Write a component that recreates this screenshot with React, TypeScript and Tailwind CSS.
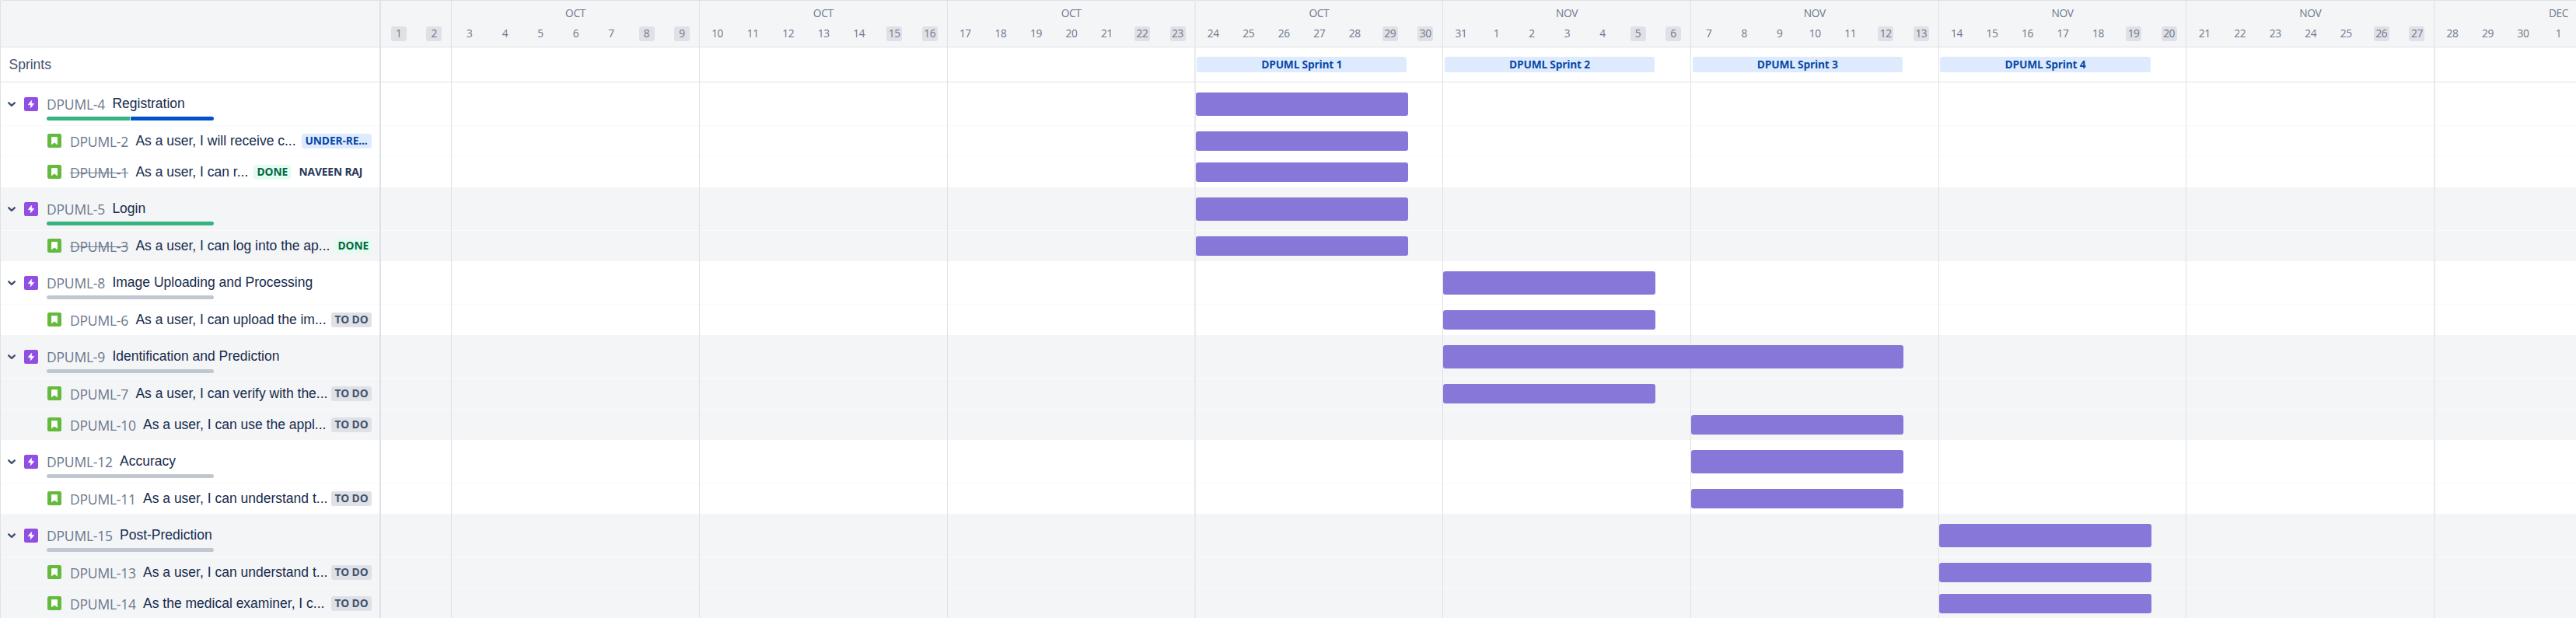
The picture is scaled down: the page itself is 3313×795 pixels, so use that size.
import React from "react";

type Badge = { label: string; tone: "blue" | "green" | "gray" | "plain" };
type Issue = { id: string; title: string; badges: Badge[]; start: number; days: number; done?: boolean };
type Epic = { id: string; title: string; progress: string[]; start: number; days: number; issues: Issue[] };

const DAY = 45.54;

const todo: Badge = { label: "TO DO", tone: "gray" };
const done: Badge = { label: "DONE", tone: "green" };

const GREEN = "bg-[#36b37e]";
const BLUE = "bg-[#0052cc]";
const GRAY = "bg-[#c1c7d0]";

const epics: Epic[] = [
  {
    id: "DPUML-4", title: "Registration", progress: [GREEN, BLUE], start: 23, days: 6,
    issues: [
      { id: "DPUML-2", title: "As a user, I will receive c...", badges: [{ label: "UNDER-RE...", tone: "blue" }], start: 23, days: 6 },
      { id: "DPUML-1", title: "As a user, I can r...", badges: [done, { label: "NAVEEN RAJ", tone: "plain" }], start: 23, days: 6, done: true },
    ],
  },
  {
    id: "DPUML-5", title: "Login", progress: [GREEN], start: 23, days: 6,
    issues: [{ id: "DPUML-3", title: "As a user, I can log into the ap...", badges: [done], start: 23, days: 6, done: true }],
  },
  {
    id: "DPUML-8", title: "Image Uploading and Processing", progress: [GRAY], start: 30, days: 6,
    issues: [{ id: "DPUML-6", title: "As a user, I can upload the im...", badges: [todo], start: 30, days: 6 }],
  },
  {
    id: "DPUML-9", title: "Identification and Prediction", progress: [GRAY], start: 30, days: 13,
    issues: [
      { id: "DPUML-7", title: "As a user, I can verify with the...", badges: [todo], start: 30, days: 6 },
      { id: "DPUML-10", title: "As a user, I can use the appl...", badges: [todo], start: 37, days: 6 },
    ],
  },
  {
    id: "DPUML-12", title: "Accuracy", progress: [GRAY], start: 37, days: 6,
    issues: [{ id: "DPUML-11", title: "As a user, I can understand t...", badges: [todo], start: 37, days: 6 }],
  },
  {
    id: "DPUML-15", title: "Post-Prediction", progress: [GRAY], start: 44, days: 6,
    issues: [
      { id: "DPUML-13", title: "As a user, I can understand t...", badges: [todo], start: 44, days: 6 },
      { id: "DPUML-14", title: "As the medical examiner, I c...", badges: [todo], start: 44, days: 6 },
    ],
  },
];

const THIN = "border-r border-[#dfe1e6]";
const SOFT = "border-r border-[#e8eaee] shadow-[1px_0_0_#e8eaee]";

const weeks: { month: string; days: number[]; span: number; weekend: number; line: string }[] = [
  { month: "", days: [1, 2], span: 2, weekend: 0, line: THIN },
  { month: "OCT", days: [3, 4, 5, 6, 7, 8, 9], span: 7, weekend: 5, line: THIN },
  { month: "OCT", days: [10, 11, 12, 13, 14, 15, 16], span: 7, weekend: 5, line: THIN },
  { month: "OCT", days: [17, 18, 19, 20, 21, 22, 23], span: 7, weekend: 5, line: SOFT },
  { month: "OCT", days: [24, 25, 26, 27, 28, 29, 30], span: 7, weekend: 5, line: THIN },
  { month: "NOV", days: [31, 1, 2, 3, 4, 5, 6], span: 7, weekend: 5, line: THIN },
  { month: "NOV", days: [7, 8, 9, 10, 11, 12, 13], span: 7, weekend: 5, line: THIN },
  { month: "NOV", days: [14, 15, 16, 17, 18, 19, 20], span: 7, weekend: 5, line: THIN },
  { month: "NOV", days: [21, 22, 23, 24, 25, 26, 27], span: 7, weekend: 5, line: SOFT },
  { month: "DEC", days: [28, 29, 30, 1], span: 7, weekend: 5, line: "" },
];

const sprints = ["DPUML Sprint 1", "DPUML Sprint 2", "DPUML Sprint 3", "DPUML Sprint 4"];

const tones = {
  blue: "bg-[#deebff] text-[#0747a6] w-[90px]",
  green: "bg-[#e3fcef] text-[#006644] w-[48px]",
  gray: "bg-[#dfe1e6] text-[#42526e] w-[52px]",
  plain: "text-[#253858] w-[98px]",
};

const UI = "font-['Open_Sans','Noto_Sans',sans-serif]";

function Chevron() {
  return (
    <svg className="h-[8px] w-[12px] shrink-0" viewBox="0 0 12 8" fill="none" stroke="#42526e" strokeWidth="2.4" strokeLinecap="round" strokeLinejoin="round">
      <path d="M2.2 2.3 L6 5.8 L9.8 2.3" />
    </svg>
  );
}

function EpicIcon() {
  return (
    <svg className="size-[18px] shrink-0" viewBox="0 0 18 18">
      <rect width="18" height="18" rx="2.2" fill="#904ee2" />
      <path d="M9.7 4 L5 9.8 H8.3 V14 L13 8.2 H9.7 Z" fill="#fff" strokeLinejoin="round" stroke="#fff" strokeWidth="0.4" />
    </svg>
  );
}

function StoryIcon() {
  return (
    <svg className="size-[18px] shrink-0" viewBox="0 0 18 18">
      <rect width="18" height="18" rx="2.2" fill="#63ba3c" />
      <path d="M5.5 4.6 H12.5 V13.7 L9 10.9 L5.5 13.7 Z" fill="#fff" stroke="#fff" strokeWidth="0.9" strokeLinejoin="round" />
    </svg>
  );
}

function Key({ id, done }: { id: string; done?: boolean }) {
  return (
    <span
      className={`${UI} shrink-0 text-[17.5px] leading-[24px] tracking-[-0.2px] text-[#6b778c] ${id.length > 7 ? "w-[94px]" : "w-[84.4px]"} ${done ? "line-through" : ""}`}
    >
      {id}
    </span>
  );
}

const TITLE = "font-['Liberation_Sans',Arial,sans-serif] text-[17.5px] leading-[24px] text-[#172b4d] whitespace-nowrap";

function Sidebar() {
  return (
    <div className="flex w-[490px] shrink-0 flex-col border-r-2 border-l border-[#dfe1e6]">
      <div className="h-[61px] shrink-0 rounded-tl-[3px] border-t border-b border-[#dfe1e6] bg-[#f4f5f7]" />
      <div className="flex h-[45px] shrink-0 items-center border-b border-[#dfe1e6] pl-[10.5px]">
        <span className="font-['Liberation_Sans',Arial,sans-serif] text-[17.5px] leading-[24px] text-[#42526e]">Sprints</span>
      </div>
      {epics.map((e, i) => (
        <div key={e.id} className={`shrink-0 ${i % 2 ? "bg-[#f4f5f7]" : "bg-white"}`}>
          <div className="flex h-[55px] pl-[8px]">
            <div className="mt-[24px]"><Chevron /></div>
            <div className="mt-[19px] ml-[10px]"><EpicIcon /></div>
            <div className="ml-[11px] flex flex-col">
              <div className="flex h-[44px] pt-[15px]">
                <div className="flex pt-[1px]"><Key id={e.id} /></div>
                <span className={TITLE}>{e.title}</span>
              </div>
              <div className="flex h-[5px] w-[215px] gap-[0.5px] overflow-hidden rounded-full">
                {e.progress.map((c) => <div key={c} className={`flex-1 ${c}`} />)}
              </div>
            </div>
          </div>
          {e.issues.map((s) => (
            <div key={s.id} className="flex h-[40px] pr-[10.5px] pl-[60px] shadow-[inset_0_1px_0_#f9fafb]">
              <div className="mt-[11px]"><StoryIcon /></div>
              <div className="ml-[11px] flex pt-[9px]"><Key id={s.id} done={s.done} /></div>
              <span className={`${TITLE} flex-1 pt-[8px]`}>{s.title}</span>
              <div className="mt-[11px] flex gap-[6px]">
                {s.badges.map((b) => (
                  <span key={b.label} className={`${UI} h-[19px] rounded-[3px] pl-[5px] text-[13.75px] leading-[17px] font-bold tracking-[-0.12px] whitespace-nowrap ${tones[b.tone]}`}>{b.label}</span>
                ))}
              </div>
            </div>
          ))}
        </div>
      ))}
    </div>
  );
}

function Bar({ start, days, tall }: { start: number; days: number; tall?: boolean }) {
  return (
    <div className={tall ? "h-[55px] pt-[13px]" : "h-[40px] pt-[8px]"}>
      <div
        className={`rounded-[3px] bg-[#8777d9] ${tall ? "h-[29.6px]" : "h-[24.6px]"}`}
        style={{ marginLeft: start * DAY + 0.2, width: days * DAY - 0.3 }}
      />
    </div>
  );
}

function Timeline() {
  return (
    <div className="grid min-w-0 flex-1 overflow-hidden">
      <div className="col-start-1 row-start-1 flex flex-col">
        <div className="h-[61px] shrink-0 border-t border-b border-[#dfe1e6] bg-[#f4f5f7]" />
        <div className="h-[45px] shrink-0 border-b border-[#dfe1e6]" />
        {epics.map((e, i) => (
          <div key={e.id} className={`shrink-0 pt-[55px] ${i % 2 ? "bg-[#f4f5f7]" : "bg-white"}`}>
            {e.issues.map((s) => <div key={s.id} className="h-[40px] shadow-[inset_0_1px_0_#f9fafb]" />)}
          </div>
        ))}
      </div>
      <div className="col-start-1 row-start-1 flex w-0">
        {weeks.map((w, i) => (
          <div key={i} className={`shrink-0 pt-[9px] ${w.line}`} style={{ width: w.span * DAY }}>
            <div className={`${UI} h-[16px] text-center text-[13.75px] leading-[16px] tracking-[-0.4px] text-[#6b778c]`}>{w.month}</div>
            <div className="mt-[9px] flex">
              {w.days.map((d, k) => (
                <div key={d} className="flex shrink-0 justify-center" style={{ width: DAY }}>
                  <span className={`${UI} h-[19px] w-[20px] rounded-[3px] text-center text-[13.75px] leading-[17px] tracking-[-0.4px] text-[#6b778c] ${k >= w.weekend ? "bg-[#dfe1e6]" : ""}`}>{d}</span>
                </div>
              ))}
            </div>
          </div>
        ))}
      </div>
      <div className="col-start-1 row-start-1 flex w-0 flex-col pt-[61px]">
        <div className="flex h-[45px] shrink-0 pt-[12px]" style={{ paddingLeft: 23 * DAY + 1.6 }}>
          {sprints.map((s) => (
            <div key={s} className="shrink-0" style={{ width: 7 * DAY }}>
              <div className={`${UI} h-[20px] w-[270.4px] rounded-[3px] bg-[#deebff] text-center text-[13.75px] leading-[20px] font-bold tracking-[-0.2px] text-[#0747a6]`}>{s}</div>
            </div>
          ))}
        </div>
        {epics.map((e) => (
          <div key={e.id}>
            <Bar start={e.start} days={e.days} tall />
            {e.issues.map((s) => <Bar key={s.id} start={s.start} days={s.days} />)}
          </div>
        ))}
      </div>
    </div>
  );
}

export default function App() {
  return (
    <div className="flex h-[795px] w-[3313px] overflow-hidden bg-white">
      <Sidebar />
      <Timeline />
    </div>
  );
}
